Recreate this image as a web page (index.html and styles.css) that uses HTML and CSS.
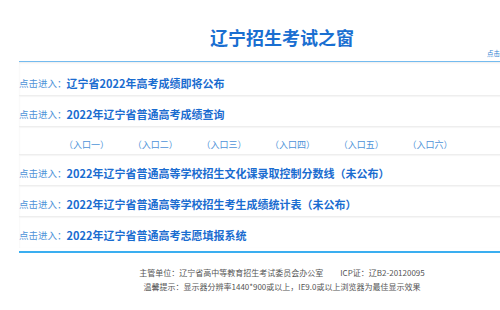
FILE: index.html
```html
<!DOCTYPE html>
<html lang="zh-CN">
<head>
<meta charset="utf-8">
<title>辽宁招生考试之窗</title>
<link rel="stylesheet" href="styles.css">
</head>
<body>
<div class="page">
  <header class="header">
    <h1 class="title">辽宁招生考试之窗</h1>
    <div class="notice-row">
      <div class="marquee">点击进入：辽宁省2022年高考成绩即将公布</div>
    </div>
  </header>
  <main class="list">
    <div class="row"><span class="label">点击进入：</span><a class="link" href="#">辽宁省2022年高考成绩即将公布</a></div>
    <div class="row"><span class="label">点击进入：</span><a class="link" href="#">2022年辽宁省普通高考成绩查询</a></div>
    <div class="row entries">
      <a class="entry" href="#">（入口一）</a>
      <a class="entry" href="#">（入口二）</a>
      <a class="entry" href="#">（入口三）</a>
      <a class="entry" href="#">（入口四）</a>
      <a class="entry" href="#">（入口五）</a>
      <a class="entry" href="#">（入口六）</a>
    </div>
    <div class="row"><span class="label">点击进入：</span><a class="link" href="#">2022年辽宁省普通高等学校招生文化课录取控制分数线（未公布）</a></div>
    <div class="row"><span class="label">点击进入：</span><a class="link" href="#">2022年辽宁省普通高等学校招生考生成绩统计表（未公布）</a></div>
    <div class="row last"><span class="label">点击进入：</span><a class="link" href="#">2022年辽宁省普通高考志愿填报系统</a></div>
  </main>
  <footer class="footer">
    <p class="foot-line">主管单位：辽宁省高中等教育招生考试委员会办公室<span class="icp">ICP证：辽B2-20120095</span></p>
    <p class="foot-line">温馨提示：显示器分辨率1440*900或以上，IE9.0或以上浏览器为最佳显示效果</p>
  </footer>
</div>
</body>
</html>
```

FILE: styles.css
```css
* { box-sizing: border-box; }
html, body {
  margin: 0;
  padding: 0;
  background: #fff;
  overflow: hidden;
}
body {
  font-family: "Noto Sans CJK SC", "Noto Sans", sans-serif;
  width: 500px;
  height: 310px;
}
a { text-decoration: none; }
.page {
  margin-left: 19px;
  width: 526px;
}
.header {
  padding-top: 27px;
}
.title {
  margin: 0;
  height: 20px;
  line-height: 20px;
  text-align: center;
  font-size: 18px;
  font-weight: 700;
  color: #1a6fd1;
}
.notice-row {
  display: flex;
  justify-content: flex-end;
  height: 12px;
  margin-bottom: 2px;
}
.marquee {
  width: 58px;
  overflow: hidden;
  white-space: nowrap;
  font-size: 6.5px;
  line-height: 12px;
  color: #2f7fd2;
}
.list {
  border-top: 1px solid #74bbef;
  box-shadow: 0 1px 2px #ececec inset;
  padding-top: 3px;
}
.row {
  display: flex;
  align-items: center;
  height: 31px;
  padding: 8px 0 3px;
  border-bottom: 1px solid #eeeeee;
  box-shadow: 0 1px 1px #f6f6f6;
}
.row.last {
  border-bottom: none;
  box-shadow: none;
}
.label {
  font-size: 9.5px;
  line-height: 20px;
  color: #4e93d8;
}
.link {
  font-size: 11px;
  line-height: 20px;
  font-weight: 700;
  color: #1a6cd0;
}
.entries {
  height: 28px;
  padding: 8px 0 0 45px;
  gap: 23.7px;
}
.entry {
  font-size: 9px;
  line-height: 20px;
  color: #4e93d8;
}
.footer {
  margin-top: 3px;
  border-top: 2px solid #3aaef0;
  padding-top: 13px;
}
.foot-line {
  margin: 0;
  text-align: center;
  font-size: 8px;
  line-height: 14px;
  color: #555;
}
.icp {
  margin-left: 17px;
}
```
